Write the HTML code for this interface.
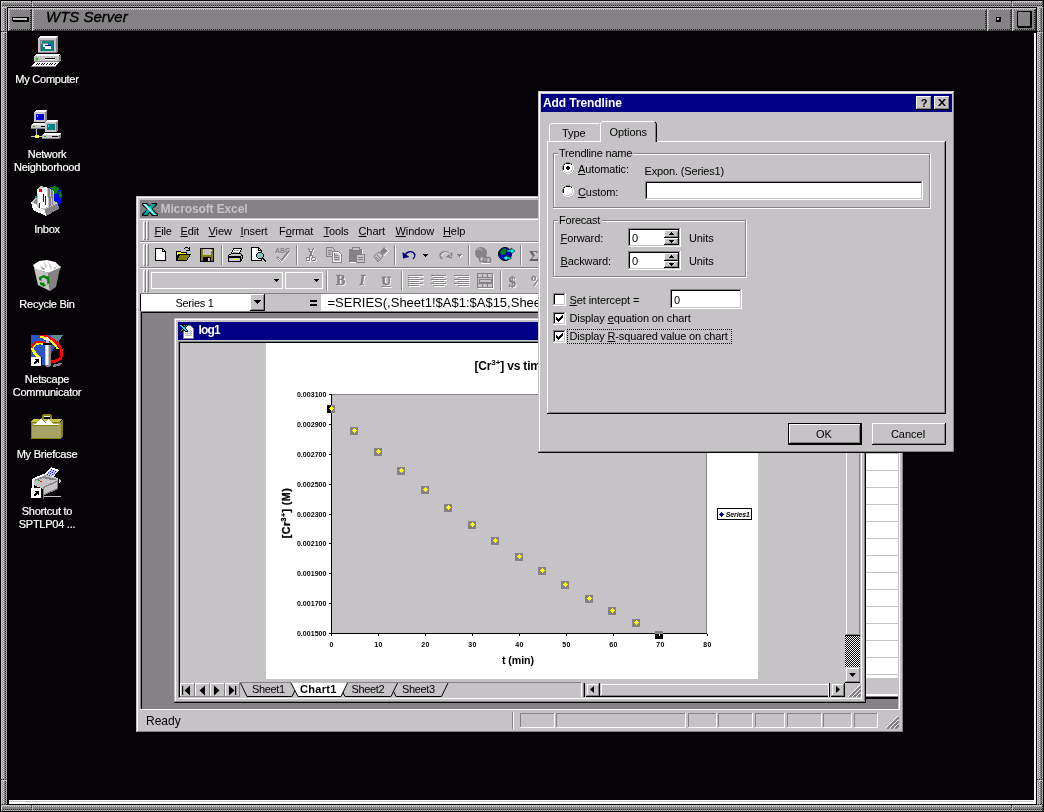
<!DOCTYPE html>
<html><head><meta charset="utf-8"><title>WTS Server</title>
<style>
html,body{margin:0;padding:0;background:#000;}
body{width:1044px;height:812px;overflow:hidden;position:relative;font-family:"Liberation Sans",sans-serif;}
i,svg,.t{position:absolute;display:block}
.t{line-height:0;white-space:nowrap;font-weight:normal;font-style:normal}
u{text-decoration:underline;text-underline-offset:1px}
svg text{font-family:"Liberation Sans",sans-serif}
#root{position:absolute;left:0;top:0;width:1044px;height:812px;will-change:transform}
</style></head><body><div id="root">
<svg style="left:0px;top:0px" width="1044" height="812" viewBox="0 0 1044 812" shape-rendering="crispEdges" ><defs>
<pattern id="pLD" width="2" height="2" patternUnits="userSpaceOnUse"><rect width="2" height="2" fill="#848284"/><rect width="1" height="1" fill="#c6c3c6"/><rect x="1" y="1" width="1" height="1" fill="#c6c3c6"/></pattern>
<pattern id="pDL" width="2" height="2" patternUnits="userSpaceOnUse"><rect width="2" height="2" fill="#c6c3c6"/><rect width="1" height="1" fill="#848284"/><rect x="1" y="1" width="1" height="1" fill="#848284"/></pattern>
<pattern id="pKD" width="2" height="2" patternUnits="userSpaceOnUse"><rect width="2" height="2" fill="#848284"/><rect width="1" height="1" fill="#292829"/><rect x="1" y="1" width="1" height="1" fill="#292829"/></pattern>
<pattern id="pWL" width="2" height="2" patternUnits="userSpaceOnUse"><rect width="2" height="2" fill="#848284"/><rect width="1" height="1" fill="#dedfde"/><rect x="1" y="1" width="1" height="1" fill="#dedfde"/></pattern>
</defs><rect x="0" y="0" width="1044" height="812" fill="#000"/><rect x="8" y="32" width="1026" height="768" fill="#050305"/><rect x="1" y="1" width="31" height="6" fill="#848284"/><rect x="1" y="1" width="31" height="1" fill="#c6c3c6"/><rect x="1" y="2" width="31" height="1" fill="url(#pLD)"/><rect x="1" y="5" width="31" height="1" fill="url(#pKD)"/><rect x="1" y="6" width="31" height="1" fill="url(#pDL)"/><rect x="1" y="1" width="1" height="6" fill="#c6c3c6"/><rect x="31" y="1" width="1" height="6" fill="url(#pKD)"/><rect x="32" y="1" width="980" height="6" fill="#848284"/><rect x="32" y="1" width="980" height="1" fill="#c6c3c6"/><rect x="32" y="2" width="980" height="1" fill="url(#pLD)"/><rect x="32" y="5" width="980" height="1" fill="url(#pKD)"/><rect x="32" y="6" width="980" height="1" fill="url(#pDL)"/><rect x="32" y="1" width="1" height="6" fill="#c6c3c6"/><rect x="1011" y="1" width="1" height="6" fill="url(#pKD)"/><rect x="1012" y="1" width="31" height="6" fill="#848284"/><rect x="1012" y="1" width="31" height="1" fill="#c6c3c6"/><rect x="1012" y="2" width="31" height="1" fill="url(#pLD)"/><rect x="1012" y="5" width="31" height="1" fill="url(#pKD)"/><rect x="1012" y="6" width="31" height="1" fill="url(#pDL)"/><rect x="1012" y="1" width="1" height="6" fill="#c6c3c6"/><rect x="1042" y="1" width="1" height="6" fill="url(#pKD)"/><rect x="1" y="805" width="31" height="6" fill="#848284"/><rect x="1" y="805" width="31" height="1" fill="#c6c3c6"/><rect x="1" y="806" width="31" height="1" fill="url(#pLD)"/><rect x="1" y="809" width="31" height="1" fill="url(#pKD)"/><rect x="1" y="810" width="31" height="1" fill="url(#pDL)"/><rect x="1" y="805" width="1" height="6" fill="#c6c3c6"/><rect x="31" y="805" width="1" height="6" fill="url(#pKD)"/><rect x="32" y="805" width="980" height="6" fill="#848284"/><rect x="32" y="805" width="980" height="1" fill="#c6c3c6"/><rect x="32" y="806" width="980" height="1" fill="url(#pLD)"/><rect x="32" y="809" width="980" height="1" fill="url(#pKD)"/><rect x="32" y="810" width="980" height="1" fill="url(#pDL)"/><rect x="32" y="805" width="1" height="6" fill="#c6c3c6"/><rect x="1011" y="805" width="1" height="6" fill="url(#pKD)"/><rect x="1012" y="805" width="31" height="6" fill="#848284"/><rect x="1012" y="805" width="31" height="1" fill="#c6c3c6"/><rect x="1012" y="806" width="31" height="1" fill="url(#pLD)"/><rect x="1012" y="809" width="31" height="1" fill="url(#pKD)"/><rect x="1012" y="810" width="31" height="1" fill="url(#pDL)"/><rect x="1012" y="805" width="1" height="6" fill="#c6c3c6"/><rect x="1042" y="805" width="1" height="6" fill="url(#pKD)"/><rect x="1" y="7" width="6" height="25" fill="#848284"/><rect x="1" y="7" width="1" height="25" fill="#c6c3c6"/><rect x="2" y="7" width="1" height="25" fill="url(#pLD)"/><rect x="3" y="7" width="1" height="25" fill="url(#pWL)"/><rect x="5" y="7" width="1" height="25" fill="url(#pKD)"/><rect x="6" y="7" width="1" height="25" fill="url(#pDL)"/><rect x="1" y="7" width="6" height="1" fill="#c6c3c6"/><rect x="1" y="31" width="6" height="1" fill="url(#pKD)"/><rect x="1" y="32" width="6" height="748" fill="#848284"/><rect x="1" y="32" width="1" height="748" fill="#c6c3c6"/><rect x="2" y="32" width="1" height="748" fill="url(#pLD)"/><rect x="3" y="32" width="1" height="748" fill="url(#pWL)"/><rect x="5" y="32" width="1" height="748" fill="url(#pKD)"/><rect x="6" y="32" width="1" height="748" fill="url(#pDL)"/><rect x="1" y="32" width="6" height="1" fill="#c6c3c6"/><rect x="1" y="779" width="6" height="1" fill="url(#pKD)"/><rect x="1" y="780" width="6" height="25" fill="#848284"/><rect x="1" y="780" width="1" height="25" fill="#c6c3c6"/><rect x="2" y="780" width="1" height="25" fill="url(#pLD)"/><rect x="3" y="780" width="1" height="25" fill="url(#pWL)"/><rect x="5" y="780" width="1" height="25" fill="url(#pKD)"/><rect x="6" y="780" width="1" height="25" fill="url(#pDL)"/><rect x="1" y="780" width="6" height="1" fill="#c6c3c6"/><rect x="1" y="804" width="6" height="1" fill="url(#pKD)"/><rect x="1037" y="7" width="6" height="25" fill="#848284"/><rect x="1037" y="7" width="1" height="25" fill="#c6c3c6"/><rect x="1038" y="7" width="1" height="25" fill="url(#pLD)"/><rect x="1039" y="7" width="1" height="25" fill="url(#pWL)"/><rect x="1041" y="7" width="1" height="25" fill="url(#pKD)"/><rect x="1042" y="7" width="1" height="25" fill="url(#pDL)"/><rect x="1037" y="7" width="6" height="1" fill="#c6c3c6"/><rect x="1037" y="31" width="6" height="1" fill="url(#pKD)"/><rect x="1037" y="32" width="6" height="748" fill="#848284"/><rect x="1037" y="32" width="1" height="748" fill="#c6c3c6"/><rect x="1038" y="32" width="1" height="748" fill="url(#pLD)"/><rect x="1039" y="32" width="1" height="748" fill="url(#pWL)"/><rect x="1041" y="32" width="1" height="748" fill="url(#pKD)"/><rect x="1042" y="32" width="1" height="748" fill="url(#pDL)"/><rect x="1037" y="32" width="6" height="1" fill="#c6c3c6"/><rect x="1037" y="779" width="6" height="1" fill="url(#pKD)"/><rect x="1037" y="780" width="6" height="25" fill="#848284"/><rect x="1037" y="780" width="1" height="25" fill="#c6c3c6"/><rect x="1038" y="780" width="1" height="25" fill="url(#pLD)"/><rect x="1039" y="780" width="1" height="25" fill="url(#pWL)"/><rect x="1041" y="780" width="1" height="25" fill="url(#pKD)"/><rect x="1042" y="780" width="1" height="25" fill="url(#pDL)"/><rect x="1037" y="780" width="6" height="1" fill="#c6c3c6"/><rect x="1037" y="804" width="6" height="1" fill="url(#pKD)"/><rect x="7" y="7" width="1030" height="1" fill="#000"/><rect x="7" y="7" width="1" height="798" fill="#000"/><rect x="1036" y="7" width="1" height="798" fill="#000"/><rect x="7" y="804" width="1030" height="1" fill="#000"/><rect x="8" y="8" width="24" height="23" fill="#848284"/><rect x="8" y="8" width="24" height="1" fill="#c6c3c6"/><rect x="8" y="9" width="24" height="1" fill="url(#pLD)"/><rect x="8" y="8" width="1" height="23" fill="#c6c3c6"/><rect x="9" y="9" width="1" height="21" fill="url(#pLD)"/><rect x="9" y="30" width="23" height="1" fill="#393839"/><rect x="10" y="29" width="22" height="1" fill="url(#pKD)"/><rect x="31" y="9" width="1" height="22" fill="#393839"/><rect x="30" y="10" width="1" height="20" fill="url(#pKD)"/><rect x="32" y="8" width="955" height="23" fill="#848284"/><rect x="32" y="8" width="955" height="1" fill="#c6c3c6"/><rect x="32" y="9" width="955" height="1" fill="url(#pLD)"/><rect x="32" y="8" width="1" height="23" fill="#c6c3c6"/><rect x="33" y="9" width="1" height="21" fill="url(#pLD)"/><rect x="33" y="30" width="954" height="1" fill="#393839"/><rect x="34" y="29" width="953" height="1" fill="url(#pKD)"/><rect x="986" y="9" width="1" height="22" fill="#393839"/><rect x="985" y="10" width="1" height="20" fill="url(#pKD)"/><rect x="987" y="8" width="25" height="23" fill="#848284"/><rect x="987" y="8" width="25" height="1" fill="#c6c3c6"/><rect x="987" y="9" width="25" height="1" fill="url(#pLD)"/><rect x="987" y="8" width="1" height="23" fill="#c6c3c6"/><rect x="988" y="9" width="1" height="21" fill="url(#pLD)"/><rect x="988" y="30" width="24" height="1" fill="#393839"/><rect x="989" y="29" width="23" height="1" fill="url(#pKD)"/><rect x="1011" y="9" width="1" height="22" fill="#393839"/><rect x="1010" y="10" width="1" height="20" fill="url(#pKD)"/><rect x="1012" y="8" width="24" height="23" fill="#848284"/><rect x="1012" y="8" width="24" height="1" fill="#c6c3c6"/><rect x="1012" y="9" width="24" height="1" fill="url(#pLD)"/><rect x="1012" y="8" width="1" height="23" fill="#c6c3c6"/><rect x="1013" y="9" width="1" height="21" fill="url(#pLD)"/><rect x="1013" y="30" width="23" height="1" fill="#393839"/><rect x="1014" y="29" width="22" height="1" fill="url(#pKD)"/><rect x="1035" y="9" width="1" height="22" fill="#393839"/><rect x="1034" y="10" width="1" height="20" fill="url(#pKD)"/><rect x="8" y="31" width="1028" height="1" fill="#000"/><rect x="12" y="17" width="17" height="5" fill="#000"/><rect x="13" y="18" width="14" height="2" fill="#c6c3c6"/><rect x="12" y="21" width="1" height="1" fill="#848284"/><rect x="996" y="17" width="5" height="5" fill="#000"/><rect x="997" y="18" width="2" height="2" fill="#c6c3c6"/><rect x="1017" y="11" width="15" height="17" fill="#000"/><rect x="1018" y="12" width="12" height="14" fill="#848284"/><rect x="1017" y="27" width="1" height="1" fill="#848284"/><rect x="9" y="800" width="1025" height="1" fill="#fff"/><rect x="9" y="801" width="1024" height="1" fill="#c6c3c6"/><rect x="1033" y="801" width="1" height="1" fill="#fff"/><rect x="9" y="802" width="1027" height="2" fill="#fff"/><rect x="1034" y="33" width="2" height="771" fill="#fff"/></svg>
<b class="t" style="top:17.40px;font-size:15px;color:#000;font-style:italic;-webkit-text-stroke:0.35px #000;letter-spacing:0px;left:46px;">WTS Server</b>
<svg style="left:31px;top:35px" width="32" height="32" viewBox="0 0 32 32" shape-rendering="crispEdges" ><polygon points="7,3 9,1 27,1 25,3" fill="#fff"/><rect x="7" y="3" width="18" height="15" fill="#c6c3c6"/><polygon points="25,3 27,1 27,16 25,18" fill="#848284"/><rect x="7" y="17" width="18" height="1" fill="#848284"/><rect x="9" y="5" width="14" height="11" fill="#848284"/><rect x="10" y="6" width="13" height="10" fill="#008284"/><rect x="10" y="6" width="1" height="3" fill="#0ff"/><rect x="12" y="8" width="5" height="4" fill="#fff"/><rect x="12" y="8" width="5" height="1" fill="#848284"/><rect x="14" y="10" width="6" height="4" fill="#fff"/><rect x="14" y="10" width="6" height="1" fill="#0000c6"/><polygon points="3,21 5,19 29,19 27,21" fill="#fff"/><rect x="3" y="21" width="25" height="6" fill="#c6c3c6"/><polygon points="28,21 30,19 30,25 28,27" fill="#848284"/><rect x="3" y="26" width="25" height="1" fill="#848284"/><rect x="5" y="23" width="2" height="2" fill="#00c300"/><rect x="14" y="23" width="10" height="1" fill="#000"/><rect x="14" y="24" width="10" height="1" fill="#fff"/><polygon points="0,31 4,27 28,27 24,31" fill="#fff"/><rect x="0" y="31" width="25" height="1" fill="#848284"/><polygon points="4.0,30 6.0,28 7.0,28 5.0,30" fill="#000"/><polygon points="6.6,30 8.6,28 9.6,28 7.6,30" fill="#000"/><polygon points="9.2,30 11.2,28 12.2,28 10.2,30" fill="#000"/><polygon points="11.8,30 13.8,28 14.8,28 12.8,30" fill="#000"/><polygon points="14.4,30 16.4,28 17.4,28 15.4,30" fill="#000"/><polygon points="17.0,30 19.0,28 20.0,28 18.0,30" fill="#000"/><polygon points="19.6,30 21.6,28 22.6,28 20.6,30" fill="#000"/><polygon points="22.2,30 24.2,28 25.2,28 23.2,30" fill="#000"/></svg>
<b class="t" style="top:79.19px;font-size:11px;color:#fff;-webkit-text-stroke:0.2px #fff;letter-spacing:-0.25px;left:-153px;width:400px;text-align:center;">My Computer</b>
<svg style="left:31px;top:110px" width="32" height="32" viewBox="0 0 32 32" shape-rendering="crispEdges" ><polygon points="3,2 5,0 16,0 14,2" fill="#fff"/><rect x="3" y="2" width="11" height="10" fill="#c6c3c6"/><polygon points="14,2 16,0 16,10 14,12" fill="#848284"/><rect x="5" y="4" width="8" height="6" fill="#0000e0"/><rect x="6" y="5" width="1" height="2" fill="#0ff"/><polygon points="0,15 2,13 19,13 17,15" fill="#fff"/><rect x="0" y="15" width="17" height="4" fill="#c6c3c6"/><polygon points="17,15 19,13 19,17 17,19" fill="#848284"/><rect x="0" y="18" width="17" height="1" fill="#848284"/><rect x="2" y="16" width="2" height="1" fill="#00c300"/><rect x="10" y="16" width="6" height="1" fill="#000"/><polygon points="14,12 16,10 27,10 25,12" fill="#fff"/><rect x="14" y="12" width="11" height="10" fill="#c6c3c6"/><polygon points="25,12 27,10 27,20 25,22" fill="#848284"/><rect x="16" y="14" width="8" height="6" fill="#008284"/><rect x="17" y="15" width="1" height="2" fill="#0ff"/><polygon points="11,25 13,23 30,23 28,25" fill="#fff"/><rect x="11" y="25" width="17" height="4" fill="#c6c3c6"/><polygon points="28,25 30,23 30,27 28,29" fill="#848284"/><rect x="11" y="28" width="17" height="1" fill="#848284"/><rect x="13" y="26" width="2" height="1" fill="#00c300"/><rect x="21" y="26" width="6" height="1" fill="#000"/><rect x="5" y="19" width="1" height="7" fill="#c6c3c6"/><rect x="0" y="26" width="11" height="1" fill="#c6c3c6"/><rect x="4" y="25" width="4" height="3" fill="#ffff00"/><rect x="5" y="26" width="2" height="1" fill="#fff"/></svg>
<b class="t" style="top:154.19px;font-size:11px;color:#fff;-webkit-text-stroke:0.2px #fff;letter-spacing:-0.25px;left:-153px;width:400px;text-align:center;">Network</b>
<b class="t" style="top:167.19px;font-size:11px;color:#fff;-webkit-text-stroke:0.2px #fff;letter-spacing:-0.25px;left:-153px;width:400px;text-align:center;">Neighborhood</b>
<svg style="left:31px;top:185px" width="32" height="32" viewBox="0 0 32 32" shape-rendering="crispEdges" ><polygon points="19,2 24,1 30,5 31,12 29,20 22,22" fill="#0000ff"/><polygon points="19,2 24,1 28,3 27,8 22,9" fill="#008200"/><polygon points="27,8 30,6 31,12 29,13" fill="#008200"/><polygon points="0,17 6,12 26,17 28,24 15,31 2,25" fill="#c6c3c6"/><polygon points="0,17 2,25 15,31 14,24" fill="#fff"/><polygon points="14,24 15,31 28,24 27,18" fill="#848284"/><polygon points="2,17 7,13 24,17 14,23" fill="#848284"/><polygon points="6,4 10,1 18,3 23,6 23,20 13,25 6,22" fill="#c6c3c6"/><polygon points="6,4 16,2 17,22 8,24" fill="#fff"/><polygon points="17,3 19,3 20,21 18,22" fill="#848284"/><polygon points="20,5 22,6 22,20 21,20" fill="#848284"/><rect x="8" y="4" width="3" height="3" fill="#f00"/><rect x="12" y="9" width="1" height="8" fill="#0000ff"/><rect x="14" y="11" width="1" height="9" fill="#0000ff"/><rect x="8" y="18" width="1" height="5" fill="#0000ff"/><rect x="4" y="11" width="2" height="2" fill="#008284"/></svg>
<b class="t" style="top:229.19px;font-size:11px;color:#fff;-webkit-text-stroke:0.2px #fff;letter-spacing:-0.25px;left:-153px;width:400px;text-align:center;">Inbox</b>
<svg style="left:31px;top:260px" width="32" height="32" viewBox="0 0 32 32" shape-rendering="auto"><polygon points="2,5 8,1 16,0 24,2 30,7 28,10 18,13 4,9" fill="#fff"/><polygon points="2,5 4,9 18,13 17,16 5,11" fill="#c6c3c6"/><polygon points="18,13 30,7 29,10 17,16" fill="#848284"/><polygon points="3,8 17,13 19,31 7,25" fill="#c6c3c6"/><polygon points="17,13 29,8 25,27 19,31" fill="#848284"/><polygon points="8,5 13,1 16,7" fill="#fff"/><polygon points="14,6 17,0.500 21,8" fill="#fff"/><polygon points="19,7 24,2 28,7 22,10" fill="#fff"/><polygon points="13,1 16,7 14,8" fill="#c6c3c6"/><polygon points="17,0.500 21,8 19,9" fill="#c6c3c6"/><polygon points="9,6 14,9 12,10" fill="#848284"/><polygon points="22,8 26,6 24,10" fill="#c6c3c6"/><path d="M8 17 L12 15.500 L13 14.500 L15 17.500 L13 18 L12.500 17.500 L10.500 18.500 L10.500 21 L8 20 Z M14.500 15.500 L18 17 L18.500 23 L16.500 24.500 L16 19.500 L14 18.500 Z M9 22 L11.500 23 L12 22 L15 25.500 L12 27 L12 26 L9 24.500 Z" fill="#008200"/></svg>
<b class="t" style="top:304.19px;font-size:11px;color:#fff;-webkit-text-stroke:0.2px #fff;letter-spacing:-0.25px;left:-153px;width:400px;text-align:center;">Recycle Bin</b>
<svg style="left:31px;top:335px" width="32" height="32" viewBox="0 0 32 32" shape-rendering="crispEdges" ><rect x="0" y="0" width="32" height="32" fill="#0030b0" fill-opacity="0"/><polygon points="0,0 32,0 26,8 14,30 0,30" fill="#2a55c5"/><polygon points="20,0 32,0 24,12" fill="#5a8a94"/><path d="M9 2 C18 0 30 8 31 18 C31 26 22 28 14 26" fill="none" stroke="#f00" stroke-width="3"/><path d="M9 2 C16 2 24 8 27 14" fill="none" stroke="#ff0" stroke-width="2"/><path d="M14 9 C6 6 0 10 2 15 C4 20 8 22 10 24" fill="none" stroke="#ff0" stroke-width="3"/><path d="M14 8 C8 5 1 8 1 13" fill="none" stroke="#f00" stroke-width="2"/><polygon points="16,1 19,5 13,5" fill="#fff"/><rect x="15" y="5" width="3" height="3" fill="#c6c3c6"/><rect x="12" y="8" width="9" height="2" fill="#000"/><rect x="14" y="10" width="5" height="20" fill="#c6c3c6"/><rect x="15" y="10" width="2" height="20" fill="#fff"/><rect x="18" y="10" width="2" height="20" fill="#848284"/><polygon points="13,30 20,30 18,32 15,32" fill="#848284"/><rect x="0" y="22" width="11" height="10" fill="#000"/><rect x="0" y="22" width="10" height="9" fill="#fff"/><path d="M3 29 L3 27 L6 25 L4 25 L4 24 L8 24 L8 28 L7 28 L7 26 L5 28 L5 29 Z" fill="#000"/><polygon points="23,29 31,28 28,31 22,32" fill="#848284"/></svg>
<b class="t" style="top:379.19px;font-size:11px;color:#fff;-webkit-text-stroke:0.2px #fff;letter-spacing:-0.25px;left:-153px;width:400px;text-align:center;">Netscape</b>
<b class="t" style="top:392.19px;font-size:11px;color:#fff;-webkit-text-stroke:0.2px #fff;letter-spacing:-0.25px;left:-153px;width:400px;text-align:center;">Communicator</b>
<svg style="left:31px;top:410px" width="32" height="32" viewBox="0 0 32 32" shape-rendering="crispEdges" ><rect x="12" y="4" width="8" height="2" fill="#848200"/><rect x="11" y="5" width="2" height="6" fill="#848200"/><rect x="19" y="5" width="2" height="6" fill="#848200"/><rect x="13" y="6" width="6" height="1" fill="#fff"/><polygon points="0,12 2,9 31,9 29,12" fill="#c6c342"/><rect x="0" y="12" width="30" height="17" fill="#a5a263"/><polygon points="30,12 32,9 32,26 30,29" fill="#848200"/><rect x="0" y="28" width="30" height="1" fill="#848200"/><rect x="0" y="12" width="1" height="17" fill="#848200"/><rect x="0" y="12" width="30" height="1" fill="#848200"/><rect x="2" y="15" width="26" height="1" fill="#848200"/><polygon points="4,14 10,8 14,12 17,9 22,14" fill="#fff"/><polygon points="9,8 10,7 15,13 14,13" fill="#848284"/><rect x="3" y="14" width="25" height="1" fill="#fff"/></svg>
<b class="t" style="top:454.19px;font-size:11px;color:#fff;-webkit-text-stroke:0.2px #fff;letter-spacing:-0.25px;left:-153px;width:400px;text-align:center;">My Briefcase</b>
<svg style="left:31px;top:467px" width="32" height="32" viewBox="0 0 32 32" shape-rendering="crispEdges" ><polygon points="13,8 20,0 28,3 21,12" fill="#fff"/><path d="M16 8.0 l5 -5.500" stroke="#0000ff" stroke-width="1.400" stroke-dasharray="1.200 0.900" fill="none" shape-rendering="auto"/><path d="M18 8.8 l5 -5.500" stroke="#0000ff" stroke-width="1.400" stroke-dasharray="1.200 0.900" fill="none" shape-rendering="auto"/><path d="M20 9.6 l5 -5.500" stroke="#0000ff" stroke-width="1.400" stroke-dasharray="1.200 0.900" fill="none" shape-rendering="auto"/><polygon points="1,12 12,7 27,11 27,14 12,22 1,17" fill="#c6c3c6"/><polygon points="1,12 12,7 14,8 3,13" fill="#fff"/><polygon points="3,13 13,9 26,12 12,18" fill="#848284"/><polygon points="4,14 12,11 24,14 13,19" fill="#c6c3c6"/><polygon points="12,20 27,13 27,22 12,29" fill="#848284"/><polygon points="13,21 26,15 26,21 13,27" fill="#c6c3c6"/><polygon points="1,12 3,13 3,24 1,23" fill="#fff"/><rect x="7" y="13" width="2" height="1" fill="#00c300"/><rect x="9" y="14" width="2" height="1" fill="#f00"/><polygon points="28,12 31,14 28,16" fill="#c6c3c6"/><rect x="13" y="29" width="17" height="1" fill="#c6c3c6"/><rect x="12" y="29" width="1" height="3" fill="#848200"/><rect x="0" y="21" width="11" height="11" fill="#000"/><rect x="0" y="21" width="10" height="10" fill="#fff"/><path d="M3 29 L3 27 L6 25 L4 25 L4 24 L8 24 L8 28 L7 28 L7 26 L5 28 L5 29 Z" fill="#000"/></svg>
<b class="t" style="top:511.19px;font-size:11px;color:#fff;-webkit-text-stroke:0.2px #fff;letter-spacing:-0.25px;left:-153px;width:400px;text-align:center;">Shortcut to</b>
<b class="t" style="top:524.19px;font-size:11px;color:#fff;-webkit-text-stroke:0.2px #fff;letter-spacing:-0.25px;left:-153px;width:400px;text-align:center;">SPTLP04 ...</b>
<i style="left:136px;top:196px;width:768px;height:537px;background:#000"></i>
<i style="left:136px;top:196px;width:767px;height:536px;background:#c6c3c6"></i>
<i style="left:137px;top:197px;width:766px;height:535px;background:#848284"></i>
<i style="left:137px;top:197px;width:765px;height:534px;background:#fff"></i>
<i style="left:138px;top:198px;width:764px;height:533px;background:#c6c3c6"></i>
<i style="left:140px;top:200px;width:760px;height:18px;background:#848284"></i>
<svg style="left:142px;top:203px" width="16" height="14" viewBox="0 0 16 14" shape-rendering="auto"><path d="M0 0 H5 L8 3 L10 0 H15 V2 L10.500 6 L16 11 V13 H10 L7.500 10 L5.500 13 H0 V11 L5 6.500 L0 2 Z" fill="#000"/><path d="M9.500 1 H14 L5 12 H1 Z" fill="#00a2a5"/><path d="M1 1 H4.500 L15 12 H11 Z" fill="#0ff"/><path d="M1 1 H3 L13.500 12 H12.500 Z" fill="#fff"/></svg>
<b class="t" style="top:208.84px;font-size:12px;color:#c6c3c6;font-weight:bold;letter-spacing:-0.12px;left:160.5px;">Microsoft Excel</b>
<i style="left:140px;top:219px;width:760px;height:1px;background:#fff"></i>
<i style="left:140px;top:241px;width:760px;height:1px;background:#848284"></i>
<i style="left:140px;top:242px;width:760px;height:1px;background:#fff"></i>
<i style="left:140px;top:267px;width:760px;height:1px;background:#848284"></i>
<i style="left:140px;top:268px;width:760px;height:1px;background:#fff"></i>
<i style="left:140px;top:293px;width:760px;height:1px;background:#848284"></i>
<i style="left:143px;top:221px;width:1px;height:19px;background:#fff"></i>
<i style="left:145px;top:221px;width:1px;height:19px;background:#848284"></i>
<i style="left:143px;top:221px;width:2px;height:1px;background:#fff"></i>
<i style="left:144px;top:239px;width:2px;height:1px;background:#848284"></i>
<i style="left:146px;top:221px;width:1px;height:19px;background:#fff"></i>
<i style="left:148px;top:221px;width:1px;height:19px;background:#848284"></i>
<i style="left:146px;top:221px;width:2px;height:1px;background:#fff"></i>
<i style="left:147px;top:239px;width:2px;height:1px;background:#848284"></i>
<i style="left:143px;top:244px;width:1px;height:22px;background:#fff"></i>
<i style="left:145px;top:244px;width:1px;height:22px;background:#848284"></i>
<i style="left:143px;top:244px;width:2px;height:1px;background:#fff"></i>
<i style="left:144px;top:265px;width:2px;height:1px;background:#848284"></i>
<i style="left:146px;top:244px;width:1px;height:22px;background:#fff"></i>
<i style="left:148px;top:244px;width:1px;height:22px;background:#848284"></i>
<i style="left:146px;top:244px;width:2px;height:1px;background:#fff"></i>
<i style="left:147px;top:265px;width:2px;height:1px;background:#848284"></i>
<i style="left:143px;top:270px;width:1px;height:22px;background:#fff"></i>
<i style="left:145px;top:270px;width:1px;height:22px;background:#848284"></i>
<i style="left:143px;top:270px;width:2px;height:1px;background:#fff"></i>
<i style="left:144px;top:291px;width:2px;height:1px;background:#848284"></i>
<i style="left:146px;top:270px;width:1px;height:22px;background:#fff"></i>
<i style="left:148px;top:270px;width:1px;height:22px;background:#848284"></i>
<i style="left:146px;top:270px;width:2px;height:1px;background:#fff"></i>
<i style="left:147px;top:291px;width:2px;height:1px;background:#848284"></i>
<b class="t" style="top:230.69px;font-size:11px;color:#000;letter-spacing:-0.1px;left:154.5px;"><u>F</u>ile</b>
<b class="t" style="top:230.69px;font-size:11px;color:#000;letter-spacing:-0.1px;left:180.5px;"><u>E</u>dit</b>
<b class="t" style="top:230.69px;font-size:11px;color:#000;letter-spacing:-0.1px;left:208.5px;"><u>V</u>iew</b>
<b class="t" style="top:230.69px;font-size:11px;color:#000;letter-spacing:-0.1px;left:240.5px;"><u>I</u>nsert</b>
<b class="t" style="top:230.69px;font-size:11px;color:#000;letter-spacing:-0.1px;left:279px;">F<u>o</u>rmat</b>
<b class="t" style="top:230.69px;font-size:11px;color:#000;letter-spacing:-0.1px;left:323.5px;"><u>T</u>ools</b>
<b class="t" style="top:230.69px;font-size:11px;color:#000;letter-spacing:-0.1px;left:358.5px;"><u>C</u>hart</b>
<b class="t" style="top:230.69px;font-size:11px;color:#000;letter-spacing:-0.1px;left:395.5px;"><u>W</u>indow</b>
<b class="t" style="top:230.69px;font-size:11px;color:#000;letter-spacing:-0.1px;left:443px;"><u>H</u>elp</b>
<svg style="left:155px;top:247px" width="16" height="16" viewBox="0 0 16 16" shape-rendering="crispEdges" ><path d="M0.5 1.5 H7.5 L10.5 4.5 V13.5 H0.5 Z" fill="#fff" stroke="#000"/><path d="M7.5 1.5 V4.5 H10.5" fill="none" stroke="#000"/></svg>
<svg style="left:175px;top:246px" width="16" height="16" viewBox="0 0 16 16" shape-rendering="crispEdges" ><path d="M1 5 H5 L6 6 H11 V8 H4 L1 13 Z" fill="#ffff00" stroke="#000" stroke-width="1"/><path d="M1.5 14.5 L4.5 8.5 H15.5 L11.5 14.5 Z" fill="#848200" stroke="#000"/><path d="M9 3 C11 1 13 1 14 3 M14 1 V4 H11" fill="none" stroke="#000"/></svg>
<svg style="left:199px;top:247px" width="16" height="16" viewBox="0 0 16 16" shape-rendering="crispEdges" ><rect x="1.5" y="1.5" width="13" height="13" fill="#848200" stroke="#000"/><rect x="4" y="2" width="8" height="6" fill="#c6c3c6"/><rect x="4" y="10" width="8" height="4" fill="#000"/><rect x="9" y="11" width="2" height="3" fill="#c6c3c6"/><rect x="12" y="3" width="1" height="1" fill="#fff"/></svg>
<i style="left:221px;top:245px;width:1px;height:20px;background:#848284"></i>
<i style="left:222px;top:245px;width:1px;height:20px;background:#fff"></i>
<svg style="left:227px;top:247px" width="shape-rendering="auto"" height="16" viewBox="0 0 shape-rendering="auto" 16" shape-rendering="crispEdges" ><path d="M6.5 1.5 H14.5 L12.5 6.5 H4.5 Z" fill="#fff" stroke="#000"/><path d="M7 3.500 H12 M6 5 H11" stroke="#848284" stroke-width="0.700"/><path d="M1.5 8.500 L4.500 6.500 H13.500 L15.500 8.500 V11.500 L13.500 14.500 H1.5 Z" fill="#c6c3c6" stroke="#000"/><path d="M1.5 9.500 H13.500 L15.500 8" fill="none" stroke="#000"/><path d="M13.500 9.500 V14.500" stroke="#000"/><rect x="2" y="10" width="11" height="1" fill="#000"/><rect x="6" y="12" width="5" height="1" fill="#ff0"/><path d="M14 10 L15 9 V11 L14 13Z" fill="#848284"/></svg>
<svg style="left:251px;top:247px" width="16" height="16" viewBox="0 0 16 16" shape-rendering="crispEdges" ><path d="M0.5 0.5 H7.5 L10.5 3.5 V13.5 H0.5 Z" fill="#fff" stroke="#000"/><path d="M7.5 0.5 V3.5 H10.5" fill="none" stroke="#000"/><circle cx="9" cy="8.5" r="3.2" fill="#84c3c6" stroke="#000"/><path d="M11.5 11 L15 14.5" stroke="#000" stroke-width="2"/></svg>
<svg style="left:274px;top:246px" width="18" height="18" viewBox="0 0 18 18" shape-rendering="auto"><text x="1" y="7" font-size="7" font-weight="bold" fill="#848284">ABC</text><path d="M3 11 L7 15 L15 5" fill="none" stroke="#848284" stroke-width="2"/><path d="M4 12 L8 16 L16 6" fill="none" stroke="#fff" stroke-width="1"/></svg>
<i style="left:296px;top:245px;width:1px;height:20px;background:#848284"></i>
<i style="left:297px;top:245px;width:1px;height:20px;background:#fff"></i>
<svg style="left:305px;top:247px" width="shape-rendering="auto"" height="16" viewBox="0 0 shape-rendering="auto" 16" shape-rendering="crispEdges" ><path d="M3.5 1 L7.5 10 M8.5 1 L4.5 10" stroke="#fff" fill="none" transform="translate(1,1)"/><circle cx="4" cy="13" r="1.800" fill="none" stroke="#fff"/><circle cx="9.500" cy="13" r="1.800" fill="none" stroke="#fff"/><path d="M3.5 1 L7.5 10 M8.5 1 L4.5 10" stroke="#848284" fill="none" stroke-width="1.300"/><circle cx="3" cy="12" r="1.800" fill="none" stroke="#848284" stroke-width="1.200"/><circle cx="8.500" cy="12" r="1.800" fill="none" stroke="#848284" stroke-width="1.200"/></svg>
<svg style="left:326px;top:247px" width="16" height="16" viewBox="0 0 16 16" shape-rendering="crispEdges" ><path d="M0.5 0.5 H6.5 L8.5 2.5 V9.5 H0.5Z M6.5 4.5 H12.5 L15.5 7.5 V15.5 H6.5 Z" fill="none" stroke="#848284"/><path d="M2 3 H6 M2 5 H5 M2 7 H5 M8 8 H12 M8 10 H13 M8 12 H13" stroke="#848284"/><path d="M7.5 5.5 H12 L14.5 8 V14.5 H7.5Z" fill="none" stroke="#fff"/></svg>
<svg style="left:349px;top:247px" width="16" height="16" viewBox="0 0 16 16" shape-rendering="crispEdges" ><rect x="0.5" y="2.5" width="12" height="12" fill="#848284" stroke="#848284"/><rect x="3" y="0.5" width="7" height="3" fill="#c6c3c6" stroke="#848284"/><rect x="7.5" y="7.5" width="8" height="8" fill="#c6c3c6" stroke="#848284"/><path d="M9 10 H14 M9 12 H14" stroke="#848284"/><path d="M13.5 3 V7 M1 15.5 H7" stroke="#fff"/></svg>
<svg style="left:372px;top:246px" width="18" height="18" viewBox="0 0 18 18" shape-rendering="auto"><path d="M12 1 L16 4 L11 9 L8 6 Z" fill="#848284"/><path d="M2 10 L7 6 L11 10 L6 16 Z" fill="none" stroke="#848284"/><path d="M4 11 L7 14 M5 9 L9 13 M3 12 L6 15" stroke="#848284"/><path d="M13 2 L17 5 L12 10" fill="none" stroke="#fff"/></svg>
<i style="left:394px;top:245px;width:1px;height:20px;background:#848284"></i>
<i style="left:395px;top:245px;width:1px;height:20px;background:#fff"></i>
<svg style="left:401px;top:247px" width="18" height="16" viewBox="0 0 18 16" shape-rendering="auto"><path d="M4 9 C5 4 12 3 14 8 C14 10 13 11 12 12" fill="none" stroke="#000084" stroke-width="1.300"/><path d="M1.5 5 L2 11.5 L8.5 10 Z" fill="#000084"/></svg>
<svg style="left:423px;top:254px" width="5" height="3" viewBox="0 0 5 3" shape-rendering="crispEdges" ><path d="M0 0 h5 v1 h-1 v1 h-1 v1 h-1 v-1 h-1 v-1 h-1z" fill="#000"/></svg>
<svg style="left:436px;top:247px" width="18" height="16" viewBox="0 0 18 16" shape-rendering="auto"><path d="M14 9 C13 4 6 3 4 8 C4 10 5 11 6 12" fill="none" stroke="#848284" stroke-width="1.6"/><path d="M16.5 5 L16 11.5 L9.5 10 Z" fill="#848284"/><path d="M15 10 C14 5 7 4 5 9" fill="none" stroke="#fff" stroke-width="0.8"/></svg>
<svg style="left:457px;top:254px" width="6" height="4" viewBox="0 0 6 4" shape-rendering="crispEdges" ><path d="M1 1 h5 v1 h-1 v1 h-1 v1 h-1 v-1 h-1 v-1 h-1z" fill="#fff"/><path d="M0 0 h5 v1 h-1 v1 h-1 v1 h-1 v-1 h-1 v-1 h-1z" fill="#848284"/></svg>
<i style="left:468px;top:245px;width:1px;height:20px;background:#848284"></i>
<i style="left:469px;top:245px;width:1px;height:20px;background:#fff"></i>
<svg style="left:474px;top:246px" width="18" height="18" viewBox="0 0 18 18" shape-rendering="auto"><circle cx="7" cy="7" r="6" fill="#848284"/><path d="M3 4 C5 2 8 3 8 5" stroke="#c6c3c6" fill="none"/><rect x="5.500" y="10.500" width="7" height="5" rx="2" fill="#c6c3c6" stroke="#848284" stroke-width="1.6"/><rect x="9.500" y="11.500" width="7" height="5" rx="2" fill="none" stroke="#848284" stroke-width="1.6"/><path d="M7 17.500 H16" stroke="#fff"/></svg>
<svg style="left:498px;top:246px" width="18" height="18" viewBox="0 0 18 18" shape-rendering="auto"><circle cx="7" cy="8" r="6.500" fill="#0000c6" stroke="#000"/><path d="M3 4 L7 2 L9 5 L7 8 L4 9 L2 7 Z M8 9 L11 10 L9 14 L7 12Z" fill="#008200"/><path d="M9 4 H13 V2 L17 5 L13 8 V6 H9 Z" fill="#00ffff" stroke="#000" stroke-width="0.600"/><path d="M13 11 H9 V9 L5 12 L9 15 V13 H13 Z" fill="#00ffff" stroke="#000" stroke-width="0.600"/></svg>
<i style="left:520px;top:245px;width:1px;height:20px;background:#848284"></i>
<i style="left:521px;top:245px;width:1px;height:20px;background:#fff"></i>
<b class="t" style="top:255.80px;font-size:15px;color:#636163;font-weight:bold;font-family:'Liberation Serif',serif;left:529px;">Σ</b>
<i style="left:151px;top:272px;width:132px;height:17px;background:#fff"></i>
<i style="left:152px;top:273px;width:130px;height:15px;background:#c6c3c6"></i>
<svg style="left:274px;top:279px" width="5" height="3" viewBox="0 0 5 3" shape-rendering="crispEdges" ><path d="M0 0 h5 v1 h-1 v1 h-1 v1 h-1 v-1 h-1 v-1 h-1z" fill="#000"/></svg>
<i style="left:285px;top:272px;width:38px;height:17px;background:#fff"></i>
<i style="left:286px;top:273px;width:36px;height:15px;background:#c6c3c6"></i>
<svg style="left:314px;top:279px" width="5" height="3" viewBox="0 0 5 3" shape-rendering="crispEdges" ><path d="M0 0 h5 v1 h-1 v1 h-1 v1 h-1 v-1 h-1 v-1 h-1z" fill="#000"/></svg>
<i style="left:326px;top:271px;width:1px;height:20px;background:#848284"></i>
<i style="left:327px;top:271px;width:1px;height:20px;background:#fff"></i>
<b class="t" style="top:281.15px;font-size:14px;color:#848284;font-weight:bold;text-shadow:1px 1px 0 #fff;-webkit-text-stroke:0.4px #848284;font-family:'Liberation Serif',serif;left:336px;">B</b>
<b class="t" style="top:281.15px;font-size:14px;color:#848284;font-weight:bold;font-style:italic;text-shadow:1px 1px 0 #fff;-webkit-text-stroke:0.4px #848284;font-family:'Liberation Serif',serif;left:359.5px;">I</b>
<b class="t" style="top:281.00px;font-size:13px;color:#848284;font-weight:bold;text-shadow:1px 1px 0 #fff;-webkit-text-stroke:0.4px #848284;font-family:'Liberation Serif',serif;left:381.5px;"><u>U</u></b>
<i style="left:401px;top:271px;width:1px;height:20px;background:#848284"></i>
<i style="left:402px;top:271px;width:1px;height:20px;background:#fff"></i>
<i style="left:409px;top:276px;width:15px;height:1px;background:#fff"></i>
<i style="left:408px;top:275px;width:15px;height:1px;background:#848284"></i>
<i style="left:409px;top:278px;width:11px;height:1px;background:#fff"></i>
<i style="left:408px;top:277px;width:11px;height:1px;background:#848284"></i>
<i style="left:409px;top:280px;width:15px;height:1px;background:#fff"></i>
<i style="left:408px;top:279px;width:15px;height:1px;background:#848284"></i>
<i style="left:409px;top:282px;width:11px;height:1px;background:#fff"></i>
<i style="left:408px;top:281px;width:11px;height:1px;background:#848284"></i>
<i style="left:409px;top:284px;width:15px;height:1px;background:#fff"></i>
<i style="left:408px;top:283px;width:15px;height:1px;background:#848284"></i>
<i style="left:409px;top:286px;width:11px;height:1px;background:#fff"></i>
<i style="left:408px;top:285px;width:11px;height:1px;background:#848284"></i>
<i style="left:432px;top:276px;width:15px;height:1px;background:#fff"></i>
<i style="left:431px;top:275px;width:15px;height:1px;background:#848284"></i>
<i style="left:434px;top:278px;width:11px;height:1px;background:#fff"></i>
<i style="left:433px;top:277px;width:11px;height:1px;background:#848284"></i>
<i style="left:432px;top:280px;width:15px;height:1px;background:#fff"></i>
<i style="left:431px;top:279px;width:15px;height:1px;background:#848284"></i>
<i style="left:434px;top:282px;width:11px;height:1px;background:#fff"></i>
<i style="left:433px;top:281px;width:11px;height:1px;background:#848284"></i>
<i style="left:432px;top:284px;width:15px;height:1px;background:#fff"></i>
<i style="left:431px;top:283px;width:15px;height:1px;background:#848284"></i>
<i style="left:434px;top:286px;width:11px;height:1px;background:#fff"></i>
<i style="left:433px;top:285px;width:11px;height:1px;background:#848284"></i>
<i style="left:455px;top:276px;width:15px;height:1px;background:#fff"></i>
<i style="left:454px;top:275px;width:15px;height:1px;background:#848284"></i>
<i style="left:459px;top:278px;width:11px;height:1px;background:#fff"></i>
<i style="left:458px;top:277px;width:11px;height:1px;background:#848284"></i>
<i style="left:455px;top:280px;width:15px;height:1px;background:#fff"></i>
<i style="left:454px;top:279px;width:15px;height:1px;background:#848284"></i>
<i style="left:459px;top:282px;width:11px;height:1px;background:#fff"></i>
<i style="left:458px;top:281px;width:11px;height:1px;background:#848284"></i>
<i style="left:455px;top:284px;width:15px;height:1px;background:#fff"></i>
<i style="left:454px;top:283px;width:15px;height:1px;background:#848284"></i>
<i style="left:459px;top:286px;width:11px;height:1px;background:#fff"></i>
<i style="left:458px;top:285px;width:11px;height:1px;background:#848284"></i>
<svg style="left:477px;top:273px" width="17" height="17" viewBox="0 0 17 17" shape-rendering="crispEdges" ><path d="M0.5 0.5 H15.5 V14.500 H0.5 Z M0.5 4.500 H15.5 M0.5 10.500 H15.5 M5.500 0.5 V4.500 M10.500 0.5 V4.500 M5.500 10.500 V14.500 M10.500 10.500 V14.500" fill="none" stroke="#848284"/><rect x="2" y="6" width="12" height="3" fill="#c6c3c6" stroke="#848284"/><path d="M1 15.500 H16.5 V1" fill="none" stroke="#fff"/></svg>
<i style="left:500px;top:271px;width:1px;height:20px;background:#848284"></i>
<i style="left:501px;top:271px;width:1px;height:20px;background:#fff"></i>
<b class="t" style="top:281.80px;font-size:15px;color:#848284;font-weight:bold;text-shadow:1px 1px 0 #fff;-webkit-text-stroke:0.4px #848284;font-family:'Liberation Serif',serif;left:508.5px;">$</b>
<b class="t" style="top:282.15px;font-size:14px;color:#848284;font-weight:bold;text-shadow:1px 1px 0 #fff;-webkit-text-stroke:0.3px #848284;font-family:'Liberation Serif',serif;left:530px;">%</b>
<i style="left:140px;top:294px;width:1px;height:18px;background:#000"></i>
<i style="left:141px;top:294px;width:109px;height:17px;background:#fff"></i>
<b class="t" style="top:302.59px;font-size:11px;color:#000;letter-spacing:-0.3px;left:-5.5px;width:400px;text-align:center;">Series 1</b>
<i style="left:250px;top:294px;width:15px;height:17px;background:#000"></i>
<i style="left:250px;top:294px;width:14px;height:16px;background:#fff"></i>
<i style="left:251px;top:295px;width:13px;height:15px;background:#848284"></i>
<i style="left:251px;top:295px;width:12px;height:14px;background:#c6c3c6"></i>
<svg style="left:254px;top:300px" width="7" height="4" viewBox="0 0 7 4" shape-rendering="crispEdges" ><path d="M0 0 H7 L3.5 4 Z" fill="#000"/></svg>
<i style="left:310px;top:300px;width:7px;height:2px;background:#000"></i>
<i style="left:310px;top:304px;width:7px;height:2px;background:#000"></i>
<i style="left:321px;top:294px;width:1px;height:17px;background:#fff"></i>
<i style="left:322px;top:294px;width:578px;height:17px;background:#fff"></i>
<b class="t" style="top:302.50px;font-size:13px;color:#000;left:327.5px;">=SERIES(,Sheet1!$A$1:$A$15,Sheet1!$B$1:$B$15,1)</b>
<i style="left:140px;top:311px;width:760px;height:398px;background:#848284"></i>
<i style="left:141px;top:312px;width:759px;height:397px;background:#000"></i>
<i style="left:142px;top:313px;width:758px;height:396px;background:#848284"></i>
<i style="left:898px;top:313px;width:1px;height:396px;background:#c6c3c6"></i>
<i style="left:899px;top:311px;width:1px;height:399px;background:#fff"></i>
<i style="left:866px;top:330px;width:32px;height:348px;background:#fff"></i>
<i style="left:866px;top:334px;width:32px;height:1px;background:#c6c3c6"></i>
<i style="left:866px;top:351px;width:32px;height:1px;background:#c6c3c6"></i>
<i style="left:866px;top:368px;width:32px;height:1px;background:#c6c3c6"></i>
<i style="left:866px;top:385px;width:32px;height:1px;background:#c6c3c6"></i>
<i style="left:866px;top:402px;width:32px;height:1px;background:#c6c3c6"></i>
<i style="left:866px;top:419px;width:32px;height:1px;background:#c6c3c6"></i>
<i style="left:866px;top:436px;width:32px;height:1px;background:#c6c3c6"></i>
<i style="left:866px;top:453px;width:32px;height:1px;background:#c6c3c6"></i>
<i style="left:866px;top:470px;width:32px;height:1px;background:#c6c3c6"></i>
<i style="left:866px;top:487px;width:32px;height:1px;background:#c6c3c6"></i>
<i style="left:866px;top:504px;width:32px;height:1px;background:#c6c3c6"></i>
<i style="left:866px;top:521px;width:32px;height:1px;background:#c6c3c6"></i>
<i style="left:866px;top:538px;width:32px;height:1px;background:#c6c3c6"></i>
<i style="left:866px;top:555px;width:32px;height:1px;background:#c6c3c6"></i>
<i style="left:866px;top:572px;width:32px;height:1px;background:#c6c3c6"></i>
<i style="left:866px;top:589px;width:32px;height:1px;background:#c6c3c6"></i>
<i style="left:866px;top:606px;width:32px;height:1px;background:#c6c3c6"></i>
<i style="left:866px;top:623px;width:32px;height:1px;background:#c6c3c6"></i>
<i style="left:866px;top:640px;width:32px;height:1px;background:#c6c3c6"></i>
<i style="left:866px;top:657px;width:32px;height:1px;background:#c6c3c6"></i>
<i style="left:866px;top:674px;width:32px;height:1px;background:#c6c3c6"></i>
<i style="left:866px;top:678px;width:32px;height:16px;background:#c6c3c6"></i>
<i style="left:866px;top:694px;width:32px;height:2px;background:#fff"></i>
<i style="left:866px;top:696px;width:32px;height:1px;background:#848284"></i>
<i style="left:866px;top:697px;width:32px;height:2px;background:#000"></i>
<i style="left:140px;top:709px;width:760px;height:1px;background:#fff"></i>
<i style="left:140px;top:710px;width:760px;height:21px;background:#c6c3c6"></i>
<b class="t" style="top:720.84px;font-size:12px;color:#000;letter-spacing:0px;left:146px;">Ready</b>
<i style="left:512px;top:712px;width:1px;height:17px;background:#848284"></i>
<i style="left:513px;top:712px;width:1px;height:17px;background:#fff"></i>
<i style="left:520px;top:713px;width:35px;height:15px;background:#fff"></i>
<i style="left:520px;top:713px;width:34px;height:14px;background:#848284"></i>
<i style="left:521px;top:714px;width:33px;height:13px;background:#c6c3c6"></i>
<i style="left:556px;top:713px;width:130px;height:15px;background:#fff"></i>
<i style="left:556px;top:713px;width:129px;height:14px;background:#848284"></i>
<i style="left:557px;top:714px;width:128px;height:13px;background:#c6c3c6"></i>
<i style="left:688px;top:713px;width:29px;height:15px;background:#fff"></i>
<i style="left:688px;top:713px;width:28px;height:14px;background:#848284"></i>
<i style="left:689px;top:714px;width:27px;height:13px;background:#c6c3c6"></i>
<i style="left:718px;top:713px;width:35px;height:15px;background:#fff"></i>
<i style="left:718px;top:713px;width:34px;height:14px;background:#848284"></i>
<i style="left:719px;top:714px;width:33px;height:13px;background:#c6c3c6"></i>
<i style="left:755px;top:713px;width:30px;height:15px;background:#fff"></i>
<i style="left:755px;top:713px;width:29px;height:14px;background:#848284"></i>
<i style="left:756px;top:714px;width:28px;height:13px;background:#c6c3c6"></i>
<i style="left:787px;top:713px;width:35px;height:15px;background:#fff"></i>
<i style="left:787px;top:713px;width:34px;height:14px;background:#848284"></i>
<i style="left:788px;top:714px;width:33px;height:13px;background:#c6c3c6"></i>
<i style="left:823px;top:713px;width:29px;height:15px;background:#fff"></i>
<i style="left:823px;top:713px;width:28px;height:14px;background:#848284"></i>
<i style="left:824px;top:714px;width:27px;height:13px;background:#c6c3c6"></i>
<i style="left:854px;top:713px;width:24px;height:15px;background:#fff"></i>
<i style="left:854px;top:713px;width:23px;height:14px;background:#848284"></i>
<i style="left:855px;top:714px;width:22px;height:13px;background:#c6c3c6"></i>
<svg style="left:885px;top:715px" width="14" height="14" viewBox="0 0 14 14" shape-rendering="crispEdges" ><path d="M13 1 L1 13 M13 5 L5 13 M13 9 L9 13" stroke="#fff"/><path d="M13.500 2 L2 13.500 M13.500 3 L3 13.500 M13.500 6 L6 13.500 M13.500 7 L7 13.500 M13.500 10 L10 13.500 M13.500 11 L11 13.500" stroke="#848284"/></svg>
<i style="left:174px;top:318px;width:692px;height:385px;background:#000"></i>
<i style="left:174px;top:318px;width:691px;height:384px;background:#c6c3c6"></i>
<i style="left:175px;top:319px;width:690px;height:383px;background:#848284"></i>
<i style="left:175px;top:319px;width:689px;height:382px;background:#fff"></i>
<i style="left:176px;top:320px;width:688px;height:381px;background:#c6c3c6"></i>
<i style="left:178px;top:322px;width:684px;height:18px;background:#000084"></i>
<svg style="left:179px;top:323px" width="17" height="16" viewBox="0 0 17 16" shape-rendering="crispEdges" ><path d="M4.5 2.5 H11.5 L14.5 5.5 V15.5 H4.5 Z" fill="#fff" stroke="#848284"/><path d="M6 8 H13 M6 10 H13 M6 12 H13 M8 7 V13 M11 7 V13" stroke="#c6c3c6"/><path d="M0 1 L3 1 L5 3 L7 1 L9 1 L9 2 L6 5 L9 8 L9 9 L6 9 L5 7 L3 9 L0 9 L0 8 L3 5 L0 2 Z" fill="#000"/><path d="M1 2 L3 2 L8 8 L6 8 Z" fill="#00e3e6"/><path d="M7 2 L8 2 L3 8 L1 8 Z" fill="#00c3c6"/></svg>
<b class="t" style="top:330.44px;font-size:12px;color:#fff;font-weight:bold;letter-spacing:-0.8px;left:198.5px;">log1</b>
<i style="left:178px;top:341px;width:684px;height:358px;background:#fff"></i>
<i style="left:178px;top:341px;width:683px;height:357px;background:#848284"></i>
<i style="left:179px;top:342px;width:682px;height:356px;background:#c6c3c6"></i>
<i style="left:179px;top:342px;width:681px;height:355px;background:#000"></i>
<i style="left:180px;top:343px;width:680px;height:354px;background:#c6c3c6"></i>
<i style="left:266px;top:343px;width:492px;height:336px;background:#fff"></i>
<i style="left:331px;top:394px;width:376px;height:240px;background:#848284"></i>
<i style="left:331px;top:395px;width:375px;height:239px;background:#c6c3c6"></i>
<i style="left:331px;top:394px;width:1px;height:241px;background:#000"></i>
<i style="left:331px;top:633px;width:376px;height:1px;background:#000"></i>
<i style="left:329px;top:394px;width:2px;height:1px;background:#000"></i>
<b class="t" style="top:394.57px;font-size:7px;color:#000;font-weight:bold;letter-spacing:0.05px;left:-73.5px;width:400px;text-align:right;">0.003100</b>
<i style="left:329px;top:424px;width:2px;height:1px;background:#000"></i>
<b class="t" style="top:424.57px;font-size:7px;color:#000;font-weight:bold;letter-spacing:0.05px;left:-73.5px;width:400px;text-align:right;">0.002900</b>
<i style="left:329px;top:454px;width:2px;height:1px;background:#000"></i>
<b class="t" style="top:454.57px;font-size:7px;color:#000;font-weight:bold;letter-spacing:0.05px;left:-73.5px;width:400px;text-align:right;">0.002700</b>
<i style="left:329px;top:484px;width:2px;height:1px;background:#000"></i>
<b class="t" style="top:484.57px;font-size:7px;color:#000;font-weight:bold;letter-spacing:0.05px;left:-73.5px;width:400px;text-align:right;">0.002500</b>
<i style="left:329px;top:514px;width:2px;height:1px;background:#000"></i>
<b class="t" style="top:514.57px;font-size:7px;color:#000;font-weight:bold;letter-spacing:0.05px;left:-73.5px;width:400px;text-align:right;">0.002300</b>
<i style="left:329px;top:543px;width:2px;height:1px;background:#000"></i>
<b class="t" style="top:543.57px;font-size:7px;color:#000;font-weight:bold;letter-spacing:0.05px;left:-73.5px;width:400px;text-align:right;">0.002100</b>
<i style="left:329px;top:573px;width:2px;height:1px;background:#000"></i>
<b class="t" style="top:573.57px;font-size:7px;color:#000;font-weight:bold;letter-spacing:0.05px;left:-73.5px;width:400px;text-align:right;">0.001900</b>
<i style="left:329px;top:603px;width:2px;height:1px;background:#000"></i>
<b class="t" style="top:603.57px;font-size:7px;color:#000;font-weight:bold;letter-spacing:0.05px;left:-73.5px;width:400px;text-align:right;">0.001700</b>
<i style="left:329px;top:633px;width:2px;height:1px;background:#000"></i>
<b class="t" style="top:633.57px;font-size:7px;color:#000;font-weight:bold;letter-spacing:0.05px;left:-73.5px;width:400px;text-align:right;">0.001500</b>
<i style="left:331px;top:634px;width:1px;height:2px;background:#000"></i>
<b class="t" style="top:644.57px;font-size:7px;color:#000;font-weight:bold;letter-spacing:0.3px;left:131.5px;width:400px;text-align:center;">0</b>
<i style="left:378px;top:634px;width:1px;height:2px;background:#000"></i>
<b class="t" style="top:644.57px;font-size:7px;color:#000;font-weight:bold;letter-spacing:0.3px;left:178.5px;width:400px;text-align:center;">10</b>
<i style="left:425px;top:634px;width:1px;height:2px;background:#000"></i>
<b class="t" style="top:644.57px;font-size:7px;color:#000;font-weight:bold;letter-spacing:0.3px;left:225.5px;width:400px;text-align:center;">20</b>
<i style="left:472px;top:634px;width:1px;height:2px;background:#000"></i>
<b class="t" style="top:644.57px;font-size:7px;color:#000;font-weight:bold;letter-spacing:0.3px;left:272.5px;width:400px;text-align:center;">30</b>
<i style="left:519px;top:634px;width:1px;height:2px;background:#000"></i>
<b class="t" style="top:644.57px;font-size:7px;color:#000;font-weight:bold;letter-spacing:0.3px;left:319.5px;width:400px;text-align:center;">40</b>
<i style="left:566px;top:634px;width:1px;height:2px;background:#000"></i>
<b class="t" style="top:644.57px;font-size:7px;color:#000;font-weight:bold;letter-spacing:0.3px;left:366.5px;width:400px;text-align:center;">50</b>
<i style="left:613px;top:634px;width:1px;height:2px;background:#000"></i>
<b class="t" style="top:644.57px;font-size:7px;color:#000;font-weight:bold;letter-spacing:0.3px;left:413.5px;width:400px;text-align:center;">60</b>
<i style="left:660px;top:634px;width:1px;height:2px;background:#000"></i>
<b class="t" style="top:644.57px;font-size:7px;color:#000;font-weight:bold;letter-spacing:0.3px;left:460.5px;width:400px;text-align:center;">70</b>
<i style="left:707px;top:634px;width:1px;height:2px;background:#000"></i>
<b class="t" style="top:644.57px;font-size:7px;color:#000;font-weight:bold;letter-spacing:0.3px;left:507.5px;width:400px;text-align:center;">80</b>
<svg style="left:0px;top:0px" width="1044" height="812" viewBox="0 0 1044 812" shape-rendering="crispEdges" ><rect x="327" y="405" width="8" height="8" fill="#848284"/><rect x="327" y="405" width="4" height="8" fill="#000"/><path d="M331 406 h1 v1 h1 v1 h1 v1 h-1 v1 h-1 v1 h-1 v-1 h-1 v-1 h-1 v-1 h1 v-1 h1 z" fill="#ff0"/><rect x="350" y="427" width="8" height="8" fill="#848284"/><path d="M354 428 h1 v1 h1 v1 h1 v1 h-1 v1 h-1 v1 h-1 v-1 h-1 v-1 h-1 v-1 h1 v-1 h1 z" fill="#ff0"/><rect x="374" y="448" width="8" height="8" fill="#848284"/><path d="M378 449 h1 v1 h1 v1 h1 v1 h-1 v1 h-1 v1 h-1 v-1 h-1 v-1 h-1 v-1 h1 v-1 h1 z" fill="#ff0"/><rect x="397" y="467" width="8" height="8" fill="#848284"/><path d="M401 468 h1 v1 h1 v1 h1 v1 h-1 v1 h-1 v1 h-1 v-1 h-1 v-1 h-1 v-1 h1 v-1 h1 z" fill="#ff0"/><rect x="421" y="486" width="8" height="8" fill="#848284"/><path d="M425 487 h1 v1 h1 v1 h1 v1 h-1 v1 h-1 v1 h-1 v-1 h-1 v-1 h-1 v-1 h1 v-1 h1 z" fill="#ff0"/><rect x="444" y="504" width="8" height="8" fill="#848284"/><path d="M448 505 h1 v1 h1 v1 h1 v1 h-1 v1 h-1 v1 h-1 v-1 h-1 v-1 h-1 v-1 h1 v-1 h1 z" fill="#ff0"/><rect x="468" y="521" width="8" height="8" fill="#848284"/><path d="M472 522 h1 v1 h1 v1 h1 v1 h-1 v1 h-1 v1 h-1 v-1 h-1 v-1 h-1 v-1 h1 v-1 h1 z" fill="#ff0"/><rect x="491" y="537" width="8" height="8" fill="#848284"/><path d="M495 538 h1 v1 h1 v1 h1 v1 h-1 v1 h-1 v1 h-1 v-1 h-1 v-1 h-1 v-1 h1 v-1 h1 z" fill="#ff0"/><rect x="515" y="553" width="8" height="8" fill="#848284"/><path d="M519 554 h1 v1 h1 v1 h1 v1 h-1 v1 h-1 v1 h-1 v-1 h-1 v-1 h-1 v-1 h1 v-1 h1 z" fill="#ff0"/><rect x="538" y="567" width="8" height="8" fill="#848284"/><path d="M542 568 h1 v1 h1 v1 h1 v1 h-1 v1 h-1 v1 h-1 v-1 h-1 v-1 h-1 v-1 h1 v-1 h1 z" fill="#ff0"/><rect x="561" y="581" width="8" height="8" fill="#848284"/><path d="M565 582 h1 v1 h1 v1 h1 v1 h-1 v1 h-1 v1 h-1 v-1 h-1 v-1 h-1 v-1 h1 v-1 h1 z" fill="#ff0"/><rect x="585" y="595" width="8" height="8" fill="#848284"/><path d="M589 596 h1 v1 h1 v1 h1 v1 h-1 v1 h-1 v1 h-1 v-1 h-1 v-1 h-1 v-1 h1 v-1 h1 z" fill="#ff0"/><rect x="608" y="607" width="8" height="8" fill="#848284"/><path d="M612 608 h1 v1 h1 v1 h1 v1 h-1 v1 h-1 v1 h-1 v-1 h-1 v-1 h-1 v-1 h1 v-1 h1 z" fill="#ff0"/><rect x="632" y="619" width="8" height="8" fill="#848284"/><path d="M636 620 h1 v1 h1 v1 h1 v1 h-1 v1 h-1 v1 h-1 v-1 h-1 v-1 h-1 v-1 h1 v-1 h1 z" fill="#ff0"/><rect x="655" y="631" width="8" height="3" fill="#848284"/><rect x="655" y="634" width="8" height="5" fill="#000"/><rect x="659" y="634" width="1" height="2" fill="#ff8"/></svg>
<b class="t" style="top:365.54px;font-size:12px;color:#000;font-weight:bold;letter-spacing:-0.2px;left:474.5px;">[Cr<span style="font-size:8px;position:relative;top:-5px;letter-spacing:0">3+</span>] vs time</b>
<b class="t" style="top:660.30px;font-size:10.67px;color:#000;font-weight:bold;letter-spacing:-0.1px;left:318px;width:400px;text-align:center;">t (min)</b>
<b class="t" style="left:286.3px;top:513px;font-size:10.67px;font-weight:bold;letter-spacing:0.45px;-webkit-text-stroke:0.3px #000;transform:translate(-50%,0) rotate(-90deg);transform-origin:50% 0;">[Cr<span style="font-size:7px;position:relative;top:-4px">3+</span>] (M)</b>
<i style="left:717px;top:508px;width:35px;height:12px;background:#000"></i>
<i style="left:718px;top:509px;width:33px;height:10px;background:#fff"></i>
<svg style="left:719px;top:512px" width="5" height="5" viewBox="0 0 5 5" shape-rendering="crispEdges" ><path d="M2 0 h1 v1 h1 v1 h1 v1 h-1 v1 h-1 v1 h-1 v-1 h-1 v-1 h-1 v-1 h1 v-1 h1 z" fill="#000084"/></svg>
<b class="t" style="top:514.57px;font-size:7px;color:#000;font-weight:bold;font-style:italic;letter-spacing:-0.1px;left:725.7px;">Series1</b>
<i style="left:180px;top:683px;width:15px;height:14px;background:#848284"></i>
<i style="left:180px;top:683px;width:14px;height:13px;background:#fff"></i>
<i style="left:181px;top:684px;width:13px;height:12px;background:#c6c3c6"></i>
<i style="left:195px;top:683px;width:15px;height:14px;background:#848284"></i>
<i style="left:195px;top:683px;width:14px;height:13px;background:#fff"></i>
<i style="left:196px;top:684px;width:13px;height:12px;background:#c6c3c6"></i>
<i style="left:210px;top:683px;width:15px;height:14px;background:#848284"></i>
<i style="left:210px;top:683px;width:14px;height:13px;background:#fff"></i>
<i style="left:211px;top:684px;width:13px;height:12px;background:#c6c3c6"></i>
<i style="left:225px;top:683px;width:15px;height:14px;background:#848284"></i>
<i style="left:225px;top:683px;width:14px;height:13px;background:#fff"></i>
<i style="left:226px;top:684px;width:13px;height:12px;background:#c6c3c6"></i>
<svg style="left:180px;top:683px" width="60" height="14" viewBox="0 0 60 14" shape-rendering="auto"><path d="M2 3 h1.200 v9 h-1.200z M10 2.500 V12.500 L4.500 7.500z M25 2.500 V12.500 L19.500 7.500z M34 2.500 V12.500 L39.500 7.500z M49 2.500 V12.500 L54.500 7.500z M55 3 h1.200 v9 h-1.200z" fill="#000"/></svg>
<svg style="left:236px;top:680px" width="346" height="18" viewBox="0 0 346 18" shape-rendering="auto"><path d="M4 2.5 H345" stroke="#848284"/><path d="M153.5 3 L160 16.5 H205.5 L212 3 Z" fill="#c6c3c6"/><path d="M153.5 3 L160 16.5 H205.5 L212 3" fill="none" stroke="#000"/><path d="M102.5 3 L109 16.5 H155 L161.5 3 Z" fill="#c6c3c6"/><path d="M102.5 3 L109 16.5 H155 L161.5 3" fill="none" stroke="#000"/><path d="M4.5 3 L11 16.5 H56 L62.5 3 Z" fill="#c6c3c6"/><path d="M4.5 3 L11 16.5 H56 L62.5 3" fill="none" stroke="#000"/><rect x="55" y="2" width="56" height="1" fill="#c6c3c6"/><path d="M55 3 L62 16.5 H105 L111.5 3 Z" fill="#fff"/><path d="M55 3 L62 16.5 H105 L111.5 3" fill="none" stroke="#000"/></svg>
<b class="t" style="top:689.49px;font-size:11px;color:#000;letter-spacing:-0.35px;left:252px;">Sheet1</b>
<b class="t" style="top:689.49px;font-size:11px;color:#000;font-weight:bold;letter-spacing:0.3px;left:300px;">Chart1</b>
<b class="t" style="top:689.49px;font-size:11px;color:#000;letter-spacing:-0.35px;left:351.5px;">Sheet2</b>
<b class="t" style="top:689.49px;font-size:11px;color:#000;letter-spacing:-0.35px;left:402px;">Sheet3</b>
<i style="left:581px;top:683px;width:1px;height:14px;background:#fff"></i>
<i style="left:582px;top:683px;width:2px;height:14px;background:#c6c3c6"></i>
<i style="left:583px;top:683px;width:1px;height:14px;background:#848284"></i>
<i style="left:584px;top:683px;width:1px;height:14px;background:#000"></i>
<i style="left:585px;top:683px;width:260px;height:14px;background:#c6c3c6"></i>
<i style="left:586px;top:683px;width:14px;height:14px;background:#000"></i>
<i style="left:586px;top:683px;width:13px;height:13px;background:#c6c3c6"></i>
<i style="left:587px;top:684px;width:12px;height:12px;background:#848284"></i>
<i style="left:587px;top:684px;width:11px;height:11px;background:#fff"></i>
<i style="left:588px;top:685px;width:10px;height:10px;background:#c6c3c6"></i>
<svg style="left:590px;top:686px" width="4" height="7" viewBox="0 0 4 7" shape-rendering="auto"><path d="M4 0 V7 L0 3.5Z" fill="#000"/></svg>
<i style="left:600px;top:683px;width:230px;height:14px;background:#000"></i>
<i style="left:600px;top:683px;width:229px;height:13px;background:#c6c3c6"></i>
<i style="left:601px;top:684px;width:228px;height:12px;background:#848284"></i>
<i style="left:601px;top:684px;width:227px;height:11px;background:#fff"></i>
<i style="left:602px;top:685px;width:226px;height:10px;background:#c6c3c6"></i>
<i style="left:831px;top:683px;width:14px;height:14px;background:#000"></i>
<i style="left:831px;top:683px;width:13px;height:13px;background:#c6c3c6"></i>
<i style="left:832px;top:684px;width:12px;height:12px;background:#848284"></i>
<i style="left:832px;top:684px;width:11px;height:11px;background:#fff"></i>
<i style="left:833px;top:685px;width:10px;height:10px;background:#c6c3c6"></i>
<svg style="left:836px;top:686px" width="4" height="7" viewBox="0 0 4 7" shape-rendering="auto"><path d="M0 0 V7 L4 3.5Z" fill="#000"/></svg>
<svg style="left:828px;top:683px" width="2" height="14" viewBox="0 0 2 14" shape-rendering="crispEdges" ><rect width="1" height="14" fill="#fff"/><path d="M1.5 0 V14" stroke="#000" stroke-dasharray="1 1"/></svg>
<i style="left:845px;top:343px;width:16px;height:340px;background:#c6c3c6"></i>
<i style="left:845px;top:343px;width:16px;height:293px;background:#000"></i>
<i style="left:845px;top:343px;width:15px;height:292px;background:#c6c3c6"></i>
<i style="left:846px;top:344px;width:14px;height:291px;background:#848284"></i>
<i style="left:846px;top:344px;width:13px;height:290px;background:#fff"></i>
<i style="left:847px;top:345px;width:12px;height:289px;background:#c6c3c6"></i>
<svg style="left:845px;top:636px" width="16" height="31" viewBox="0 0 16 31" shape-rendering="crispEdges" ><defs><pattern id="pKL" width="2" height="2" patternUnits="userSpaceOnUse"><rect width="2" height="2" fill="#fff"/><rect width="1" height="1" fill="#000"/><rect x="1" y="1" width="1" height="1" fill="#000"/></pattern></defs><rect width="16" height="31" fill="url(#pKL)"/></svg>
<i style="left:845px;top:667px;width:16px;height:16px;background:#000"></i>
<i style="left:845px;top:667px;width:15px;height:15px;background:#c6c3c6"></i>
<i style="left:846px;top:668px;width:14px;height:14px;background:#848284"></i>
<i style="left:846px;top:668px;width:13px;height:13px;background:#fff"></i>
<i style="left:847px;top:669px;width:12px;height:12px;background:#c6c3c6"></i>
<svg style="left:849px;top:673px" width="7" height="4" viewBox="0 0 7 4" shape-rendering="auto"><path d="M0 0 H7 L3.5 4Z" fill="#000"/></svg>
<i style="left:860px;top:343px;width:1px;height:340px;background:#c6c3c6"></i>
<i style="left:845px;top:683px;width:16px;height:14px;background:#c6c3c6"></i>
<svg style="left:847px;top:684px" width="14" height="13" viewBox="0 0 14 13" shape-rendering="crispEdges" ><path d="M13 1 L1 13 M13 5 L5 13 M13 9 L9 13" stroke="#fff"/><path d="M13.5 2 L2 13.5 M13.5 3 L3 13.5 M13.5 6 L6 13.5 M13.5 7 L7 13.5 M13.5 10 L10 13.5 M13.5 11 L11 13.5" stroke="#848284"/></svg>
<i style="left:538px;top:91px;width:417px;height:362px;background:#000"></i>
<i style="left:538px;top:91px;width:416px;height:361px;background:#c6c3c6"></i>
<i style="left:539px;top:92px;width:415px;height:360px;background:#848284"></i>
<i style="left:539px;top:92px;width:414px;height:359px;background:#fff"></i>
<i style="left:540px;top:93px;width:413px;height:358px;background:#c6c3c6"></i>
<i style="left:541px;top:94px;width:411px;height:18px;background:#000084"></i>
<b class="t" style="top:102.54px;font-size:12px;color:#fff;font-weight:bold;letter-spacing:-0.08px;left:543px;">Add Trendline</b>
<i style="left:916px;top:96px;width:16px;height:14px;background:#000"></i>
<i style="left:916px;top:96px;width:15px;height:13px;background:#fff"></i>
<i style="left:917px;top:97px;width:14px;height:12px;background:#848284"></i>
<i style="left:917px;top:97px;width:13px;height:11px;background:#c6c3c6"></i>
<b class="t" style="top:102.69px;font-size:11px;color:#000;font-weight:bold;left:724px;width:400px;text-align:center;">?</b>
<i style="left:934px;top:96px;width:16px;height:14px;background:#000"></i>
<i style="left:934px;top:96px;width:15px;height:13px;background:#fff"></i>
<i style="left:935px;top:97px;width:14px;height:12px;background:#848284"></i>
<i style="left:935px;top:97px;width:13px;height:11px;background:#c6c3c6"></i>
<svg style="left:938px;top:99px" width="8" height="7" viewBox="0 0 8 7" shape-rendering="auto"><path d="M0 0 H2 L4 2.5 L6 0 H8 L5 3.5 L8 7 H6 L4 4.500 L2 7 H0 L3 3.5 Z" fill="#000"/></svg>
<i style="left:547px;top:141px;width:399px;height:273px;background:#000"></i>
<i style="left:547px;top:141px;width:398px;height:272px;background:#fff"></i>
<i style="left:548px;top:142px;width:397px;height:271px;background:#848284"></i>
<i style="left:548px;top:142px;width:396px;height:270px;background:#c6c3c6"></i>
<i style="left:549px;top:125px;width:1px;height:16px;background:#fff"></i>
<i style="left:550px;top:124px;width:1px;height:1px;background:#fff"></i>
<i style="left:551px;top:123px;width:49px;height:1px;background:#fff"></i>
<i style="left:600px;top:121px;width:56px;height:22px;background:#c6c3c6"></i>
<i style="left:600px;top:123px;width:1px;height:19px;background:#fff"></i>
<i style="left:601px;top:122px;width:1px;height:1px;background:#fff"></i>
<i style="left:602px;top:121px;width:52px;height:1px;background:#fff"></i>
<i style="left:654px;top:122px;width:1px;height:1px;background:#848284"></i>
<i style="left:655px;top:122px;width:1px;height:1px;background:#000"></i>
<i style="left:655px;top:123px;width:1px;height:19px;background:#848284"></i>
<i style="left:656px;top:123px;width:1px;height:19px;background:#000"></i>
<i style="left:599px;top:123px;width:1px;height:18px;background:#c6c3c6"></i>
<b class="t" style="top:132.79px;font-size:11px;color:#000;letter-spacing:-0.05px;left:562px;">Type</b>
<b class="t" style="top:131.79px;font-size:11px;color:#000;letter-spacing:-0.05px;left:609.5px;">Options</b>
<i style="left:553px;top:153px;width:377px;height:1px;background:#848284"></i>
<i style="left:553px;top:153px;width:1px;height:55px;background:#848284"></i>
<i style="left:554px;top:154px;width:376px;height:1px;background:#fff"></i>
<i style="left:554px;top:154px;width:1px;height:54px;background:#fff"></i>
<i style="left:553px;top:207px;width:377px;height:1px;background:#848284"></i>
<i style="left:929px;top:153px;width:1px;height:55px;background:#848284"></i>
<i style="left:553px;top:208px;width:378px;height:1px;background:#fff"></i>
<i style="left:930px;top:153px;width:1px;height:56px;background:#fff"></i>
<i style="left:558px;top:153px;width:75px;height:2px;background:#c6c3c6"></i>
<b class="t" style="top:152.79px;font-size:11px;color:#000;letter-spacing:-0.2px;left:559px;">Trendline name</b>
<i style="left:553px;top:220px;width:193px;height:1px;background:#848284"></i>
<i style="left:553px;top:220px;width:1px;height:57px;background:#848284"></i>
<i style="left:554px;top:221px;width:192px;height:1px;background:#fff"></i>
<i style="left:554px;top:221px;width:1px;height:56px;background:#fff"></i>
<i style="left:553px;top:276px;width:193px;height:1px;background:#848284"></i>
<i style="left:745px;top:220px;width:1px;height:57px;background:#848284"></i>
<i style="left:553px;top:277px;width:194px;height:1px;background:#fff"></i>
<i style="left:746px;top:220px;width:1px;height:58px;background:#fff"></i>
<i style="left:558px;top:220px;width:44px;height:2px;background:#c6c3c6"></i>
<b class="t" style="top:219.79px;font-size:11px;color:#000;letter-spacing:-0.2px;left:559px;">Forecast</b>
<svg style="left:562px;top:162px" width="12" height="12" viewBox="0 0 12 12" shape-rendering="crispEdges" ><path d="M4 0 H8 V1 H10 V2 H11 V4 H12 V8 H11 V10 H10 V11 H8 V12 H4 V11 H2 V10 H1 V8 H0 V4 H1 V2 H2 V1 H4 Z" fill="#fff"/><path d="M4 0 H8 V1 H10 V2 H8 V1 H4 V2 H2 V4 H1 V8 H0 V4 H1 V2 H2 V1 H4 Z" fill="#848284"/><path d="M4 1 H8 V2 H10 V3 H9 V2 H4 V2 H3 V3 H2 V4 H2 V8 H1 V4 H2 V2 H4 Z" fill="#000"/><path d="M2 9 H3 V10 H8 V9 H9 V8 H10 V4 H11 V8 H10 V10 H8 V11 H4 V10 H2 Z" fill="#c6c3c6"/><rect x="4" y="5" width="4" height="2" fill="#000"/><rect x="5" y="4" width="2" height="4" fill="#000"/></svg>
<svg style="left:562px;top:185px" width="12" height="12" viewBox="0 0 12 12" shape-rendering="crispEdges" ><path d="M4 0 H8 V1 H10 V2 H11 V4 H12 V8 H11 V10 H10 V11 H8 V12 H4 V11 H2 V10 H1 V8 H0 V4 H1 V2 H2 V1 H4 Z" fill="#fff"/><path d="M4 0 H8 V1 H10 V2 H8 V1 H4 V2 H2 V4 H1 V8 H0 V4 H1 V2 H2 V1 H4 Z" fill="#848284"/><path d="M4 1 H8 V2 H10 V3 H9 V2 H4 V2 H3 V3 H2 V4 H2 V8 H1 V4 H2 V2 H4 Z" fill="#000"/><path d="M2 9 H3 V10 H8 V9 H9 V8 H10 V4 H11 V8 H10 V10 H8 V11 H4 V10 H2 Z" fill="#c6c3c6"/></svg>
<b class="t" style="top:168.79px;font-size:11px;color:#000;letter-spacing:-0.1px;left:578px;"><u>A</u>utomatic:</b>
<b class="t" style="top:170.89px;font-size:11px;color:#000;letter-spacing:-0.15px;left:644.5px;">Expon. (Series1)</b>
<b class="t" style="top:191.79px;font-size:11px;color:#000;letter-spacing:-0.1px;left:578px;"><u>C</u>ustom:</b>
<i style="left:645px;top:181px;width:278px;height:19px;background:#fff"></i>
<i style="left:645px;top:181px;width:277px;height:18px;background:#848284"></i>
<i style="left:646px;top:182px;width:276px;height:17px;background:#c6c3c6"></i>
<i style="left:646px;top:182px;width:275px;height:16px;background:#000"></i>
<i style="left:647px;top:183px;width:274px;height:15px;background:#fff"></i>
<b class="t" style="top:238.19px;font-size:11px;color:#000;letter-spacing:-0.1px;left:560.5px;"><u>F</u>orward:</b>
<b class="t" style="top:261.19px;font-size:11px;color:#000;letter-spacing:-0.1px;left:560.5px;"><u>B</u>ackward:</b>
<i style="left:628px;top:228px;width:53px;height:19px;background:#fff"></i>
<i style="left:628px;top:228px;width:52px;height:18px;background:#848284"></i>
<i style="left:629px;top:229px;width:51px;height:17px;background:#c6c3c6"></i>
<i style="left:629px;top:229px;width:50px;height:16px;background:#000"></i>
<i style="left:630px;top:230px;width:49px;height:15px;background:#fff"></i>
<b class="t" style="top:237.69px;font-size:11px;color:#000;left:632px;">0</b>
<i style="left:664px;top:230px;width:15px;height:8px;background:#000"></i>
<i style="left:664px;top:230px;width:14px;height:7px;background:#fff"></i>
<i style="left:665px;top:231px;width:13px;height:6px;background:#848284"></i>
<i style="left:665px;top:231px;width:12px;height:5px;background:#c6c3c6"></i>
<i style="left:664px;top:238px;width:15px;height:7px;background:#000"></i>
<i style="left:664px;top:238px;width:14px;height:6px;background:#fff"></i>
<i style="left:665px;top:239px;width:13px;height:5px;background:#848284"></i>
<i style="left:665px;top:239px;width:12px;height:4px;background:#c6c3c6"></i>
<svg style="left:669px;top:232px" width="5" height="3" viewBox="0 0 5 3" shape-rendering="crispEdges" ><path d="M2 0 h1 v1 h1 v1 h1 v1 h-5 v-1 h1 v-1 h1z" fill="#000"/></svg>
<svg style="left:669px;top:240px" width="5" height="3" viewBox="0 0 5 3" shape-rendering="crispEdges" ><path d="M0 0 h5 v1 h-1 v1 h-1 v1 h-1 v-1 h-1 v-1 h-1z" fill="#000"/></svg>
<i style="left:628px;top:251px;width:53px;height:19px;background:#fff"></i>
<i style="left:628px;top:251px;width:52px;height:18px;background:#848284"></i>
<i style="left:629px;top:252px;width:51px;height:17px;background:#c6c3c6"></i>
<i style="left:629px;top:252px;width:50px;height:16px;background:#000"></i>
<i style="left:630px;top:253px;width:49px;height:15px;background:#fff"></i>
<b class="t" style="top:260.69px;font-size:11px;color:#000;left:632px;">0</b>
<i style="left:664px;top:253px;width:15px;height:8px;background:#000"></i>
<i style="left:664px;top:253px;width:14px;height:7px;background:#fff"></i>
<i style="left:665px;top:254px;width:13px;height:6px;background:#848284"></i>
<i style="left:665px;top:254px;width:12px;height:5px;background:#c6c3c6"></i>
<i style="left:664px;top:261px;width:15px;height:7px;background:#000"></i>
<i style="left:664px;top:261px;width:14px;height:6px;background:#fff"></i>
<i style="left:665px;top:262px;width:13px;height:5px;background:#848284"></i>
<i style="left:665px;top:262px;width:12px;height:4px;background:#c6c3c6"></i>
<svg style="left:669px;top:255px" width="5" height="3" viewBox="0 0 5 3" shape-rendering="crispEdges" ><path d="M2 0 h1 v1 h1 v1 h1 v1 h-5 v-1 h1 v-1 h1z" fill="#000"/></svg>
<svg style="left:669px;top:263px" width="5" height="3" viewBox="0 0 5 3" shape-rendering="crispEdges" ><path d="M0 0 h5 v1 h-1 v1 h-1 v1 h-1 v-1 h-1 v-1 h-1z" fill="#000"/></svg>
<b class="t" style="top:238.19px;font-size:11px;color:#000;letter-spacing:-0.1px;left:689px;">Units</b>
<b class="t" style="top:261.19px;font-size:11px;color:#000;letter-spacing:-0.1px;left:689px;">Units</b>
<i style="left:553px;top:293px;width:13px;height:13px;background:#fff"></i>
<i style="left:553px;top:293px;width:12px;height:12px;background:#848284"></i>
<i style="left:554px;top:294px;width:11px;height:11px;background:#c6c3c6"></i>
<i style="left:554px;top:294px;width:10px;height:10px;background:#000"></i>
<i style="left:555px;top:295px;width:9px;height:9px;background:#fff"></i>
<i style="left:553px;top:312px;width:13px;height:13px;background:#fff"></i>
<i style="left:553px;top:312px;width:12px;height:12px;background:#848284"></i>
<i style="left:554px;top:313px;width:11px;height:11px;background:#c6c3c6"></i>
<i style="left:554px;top:313px;width:10px;height:10px;background:#000"></i>
<i style="left:555px;top:314px;width:9px;height:9px;background:#fff"></i>
<svg style="left:556px;top:315px" width="7" height="7" viewBox="0 0 7 7" shape-rendering="crispEdges" ><path d="M0 2 v3 h1 v1 h1 v1 h1 v-1 h1 v-1 h1 v-1 h1 v-1 h1 v-3 h-1 v1 h-1 v1 h-1 v1 h-1 v1 h-1 v-1 h-1 v-1 z" fill="#000"/></svg>
<i style="left:553px;top:330px;width:13px;height:13px;background:#fff"></i>
<i style="left:553px;top:330px;width:12px;height:12px;background:#848284"></i>
<i style="left:554px;top:331px;width:11px;height:11px;background:#c6c3c6"></i>
<i style="left:554px;top:331px;width:10px;height:10px;background:#000"></i>
<i style="left:555px;top:332px;width:9px;height:9px;background:#fff"></i>
<svg style="left:556px;top:333px" width="7" height="7" viewBox="0 0 7 7" shape-rendering="crispEdges" ><path d="M0 2 v3 h1 v1 h1 v1 h1 v-1 h1 v-1 h1 v-1 h1 v-1 h1 v-3 h-1 v1 h-1 v1 h-1 v1 h-1 v1 h-1 v-1 h-1 v-1 z" fill="#000"/></svg>
<b class="t" style="top:299.99px;font-size:11px;color:#000;letter-spacing:-0.1px;left:569.5px;"><u>S</u>et intercept =</b>
<i style="left:670px;top:289px;width:72px;height:20px;background:#fff"></i>
<i style="left:670px;top:289px;width:71px;height:19px;background:#848284"></i>
<i style="left:671px;top:290px;width:70px;height:18px;background:#c6c3c6"></i>
<i style="left:671px;top:290px;width:69px;height:17px;background:#000"></i>
<i style="left:672px;top:291px;width:68px;height:16px;background:#fff"></i>
<b class="t" style="top:299.69px;font-size:11px;color:#000;left:674px;">0</b>
<b class="t" style="top:318.19px;font-size:11px;color:#000;letter-spacing:-0.12px;left:569.5px;">Display <u>e</u>quation on chart</b>
<b class="t" style="top:336.19px;font-size:11px;color:#000;letter-spacing:-0.14px;left:569.5px;">Display <u>R</u>-squared value on chart</b>
<i style="left:567px;top:329px;width:163px;height:13px;border:1px dotted #000;background:none"></i>
<i style="left:788px;top:423px;width:74px;height:22px;background:#000"></i>
<i style="left:789px;top:424px;width:72px;height:20px;background:#000"></i>
<i style="left:789px;top:424px;width:71px;height:19px;background:#fff"></i>
<i style="left:790px;top:425px;width:70px;height:18px;background:#848284"></i>
<i style="left:790px;top:425px;width:69px;height:17px;background:#c6c3c6"></i>
<b class="t" style="top:434.19px;font-size:11px;color:#000;left:624px;width:400px;text-align:center;">OK</b>
<i style="left:872px;top:423px;width:74px;height:22px;background:#000"></i>
<i style="left:872px;top:423px;width:73px;height:21px;background:#fff"></i>
<i style="left:873px;top:424px;width:72px;height:20px;background:#848284"></i>
<i style="left:873px;top:424px;width:71px;height:19px;background:#c6c3c6"></i>
<b class="t" style="top:434.19px;font-size:11px;color:#000;left:708px;width:400px;text-align:center;">Cancel</b>
</div></body></html>
